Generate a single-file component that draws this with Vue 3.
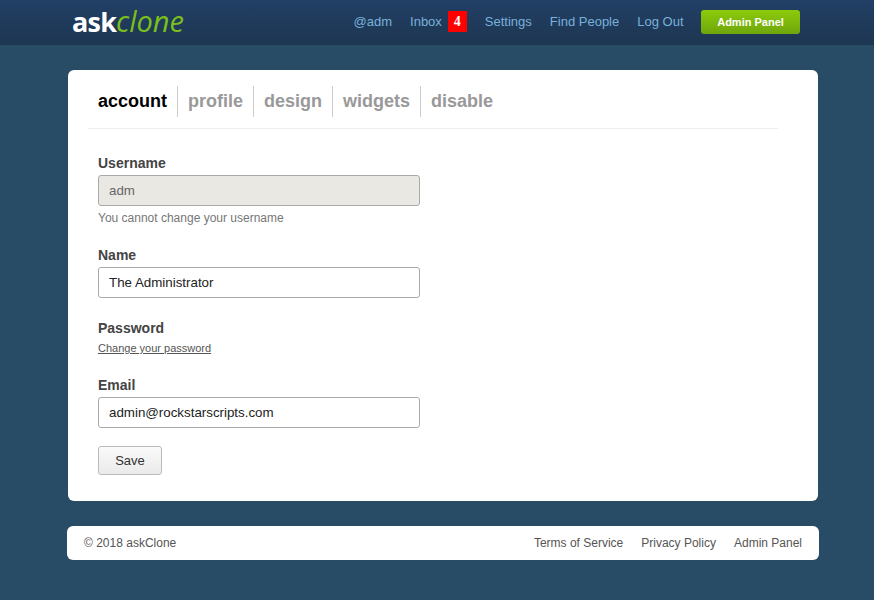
<template>
  <div class="page">
    <header class="topbar">
      <div class="topbar-inner">
        <a class="logo"><b>ask</b><i>clone</i></a>
        <nav class="topnav">
          <a>@adm</a>
          <a class="inbox">Inbox <span class="badge">4</span></a>
          <a>Settings</a>
          <a>Find People</a>
          <a>Log Out</a>
          <a class="admin-btn">Admin Panel</a>
        </nav>
      </div>
    </header>

    <main class="card">
      <ul class="tabs">
        <li v-for="tab in tabs" :key="tab" :class="{ active: tab === 'account' }">{{ tab }}</li>
      </ul>

      <form class="form" @submit.prevent>
        <div class="field username">
          <label>Username</label>
          <input class="input disabled" type="text" value="adm" disabled />
          <p class="hint">You cannot change your username</p>
        </div>
        <div class="field">
          <label>Name</label>
          <input class="input" type="text" value="The Administrator" />
        </div>
        <div class="field">
          <label>Password</label>
          <a class="change-link">Change your password</a>
        </div>
        <div class="field email">
          <label>Email</label>
          <input class="input" type="text" value="admin@rockstarscripts.com" />
        </div>
        <button class="save" type="submit">Save</button>
      </form>
    </main>

    <footer class="footer">
      <span>© 2018 askClone</span>
      <div class="footer-links">
        <a>Terms of Service</a>
        <a>Privacy Policy</a>
        <a>Admin Panel</a>
      </div>
    </footer>
  </div>
</template>

<script setup>
const tabs = ['account', 'profile', 'design', 'widgets', 'disable']
</script>

<style>
html,
body {
  margin: 0;
  background: #284c66;
}
</style>

<style scoped>
.page {
  height: 600px;
  overflow: hidden;
  background: #284c66;
  font-family: "Liberation Sans", Arial, sans-serif;
  font-size: 14px;
  color: #444;
}

.topbar {
  height: 45px;
  background: linear-gradient(to bottom, #223f66, #1d3650);
}

.topbar-inner {
  display: flex;
  align-items: center;
  justify-content: space-between;
  width: 728px;
  height: 44px;
  margin-left: 72px;
}

.logo {
  margin-top: 3px;
  font-family: "Open Sans", sans-serif;
  line-height: 45px;
}

.logo b {
  font-size: 27px;
  font-weight: 700;
  letter-spacing: -0.8px;
  color: #fff;
}

.logo i {
  font-size: 29px;
  font-weight: 400;
  color: #7abf1c;
}

.topnav {
  display: flex;
  align-items: center;
  gap: 18px;
  color: #79b1d9;
  font-size: 13px;
  line-height: 16px;
}

.inbox {
  display: flex;
  align-items: center;
  gap: 6px;
}

.badge {
  width: 19px;
  height: 21px;
  margin-bottom: 2px;
  background: #f00;
  color: #fff;
  font-family: "Liberation Serif", serif;
  font-size: 14px;
  font-weight: 700;
  line-height: 21px;
  text-align: center;
}

.admin-btn {
  width: 99px;
  height: 24px;
  margin-left: -0.5px;
  border-radius: 3px;
  background: linear-gradient(to bottom, #8ccb0a, #6fa50c);
  color: #fff;
  font-size: 11px;
  font-weight: 700;
  line-height: 25px;
  text-align: center;
}

.card {
  box-sizing: border-box;
  width: 750px;
  height: 431px;
  margin: 25px 0 0 68px;
  padding: 16px 40px 0 20px;
  border-radius: 6px;
  background: #fff;
}

.tabs {
  display: flex;
  height: 42px;
  margin: 0;
  padding: 0 0 0 10px;
  border-bottom: 1px solid #eee;
  list-style: none;
}

.tabs li {
  height: 31px;
  padding: 0 10px;
  border-left: 1px solid #ccc;
  color: #999;
  font-size: 18px;
  font-weight: 700;
  line-height: 30px;
}

.tabs li:first-child {
  padding-left: 0;
  border-left: 0;
}

.tabs li.active {
  color: #000;
}

.form {
  padding: 26px 0 0 10px;
}

.field {
  margin-bottom: 22px;
}

.field.username {
  margin-bottom: 21px;
}

.field.email {
  margin-bottom: 18px;
}

.field label {
  display: block;
  margin-bottom: 4px;
  font-weight: 700;
  line-height: 16px;
}

.input {
  display: block;
  box-sizing: border-box;
  width: 322px;
  height: 31px;
  padding: 0 10px;
  border: 1px solid #aaa;
  border-radius: 3px;
  background: #fff;
  color: #222;
  font-family: inherit;
  font-size: 13.33px;
  outline: none;
}

.input.disabled {
  background: #e9e8e2;
  color: #666;
}

.hint {
  margin: 4px 0 0;
  color: #777;
  font-size: 12px;
  line-height: 16px;
}

.change-link {
  display: block;
  margin-top: 5px;
  color: #555;
  font-size: 11px;
  line-height: 14px;
  text-decoration: underline;
}

.save {
  display: block;
  width: 64px;
  height: 29px;
  border: 1px solid #bbb;
  border-radius: 3px;
  background: linear-gradient(to bottom, #fafafa, #eaeaea);
  color: #333;
  font-family: inherit;
  font-size: 13px;
}

.footer {
  display: flex;
  align-items: center;
  justify-content: space-between;
  box-sizing: border-box;
  width: 752px;
  height: 34px;
  margin: 25px 0 0 67px;
  padding: 0 17px;
  border-radius: 6px;
  background: #fff;
  color: #555;
  font-size: 12px;
}

.footer-links {
  display: flex;
  gap: 18px;
}
</style>
